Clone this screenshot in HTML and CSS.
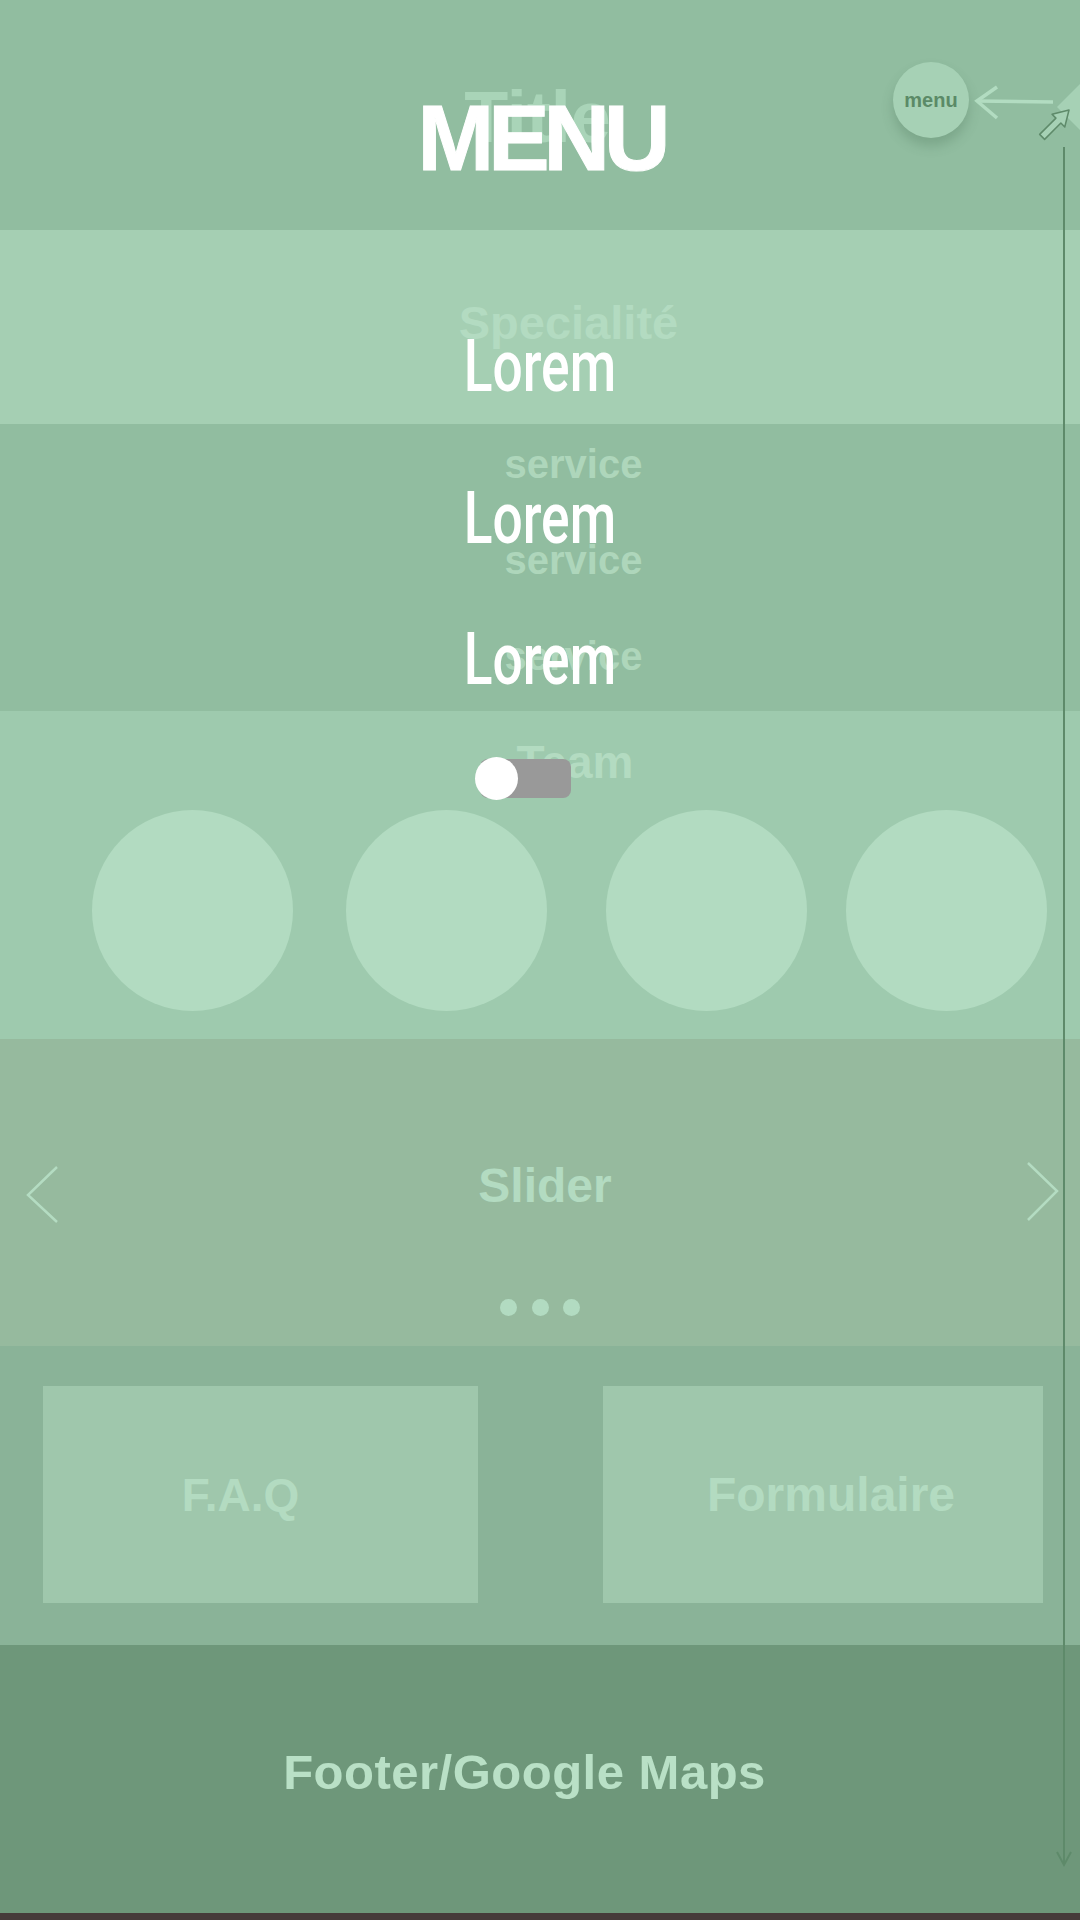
FILE: index.html
```html
<!DOCTYPE html>
<html lang="fr">
<head>
  <meta charset="UTF-8">
  <title>Maquette mobile</title>
  <link rel="stylesheet" href="styles.css">
</head>
<body>
  <div class="page">
    <header class="hero">
      <div class="ghost title">Title</div>
    </header>

    <section class="spec">
      <div class="ghost spec-title">Specialité</div>
    </section>

    <section class="services">
      <div class="ghost svc">service</div>
      <div class="ghost svc">service</div>
      <div class="ghost svc">service</div>
    </section>

    <section class="team">
      <div class="ghost team-title">Team</div>
      <div class="members">
        <div class="member"></div>
        <div class="member"></div>
        <div class="member"></div>
        <div class="member"></div>
      </div>
    </section>

    <section class="slider">
      <div class="slider-row">
        <svg class="chev-left" width="32" height="57" viewBox="0 0 32 57">
          <polyline points="31,1 2,29 31,56" />
        </svg>
        <div class="ghost slider-title">Slider</div>
        <svg class="chev-right" width="32" height="59" viewBox="0 0 32 59">
          <polyline points="1,1 30,29 1,58" />
        </svg>
      </div>
      <div class="dots"><span></span><span></span><span></span></div>
    </section>

    <section class="contact">
      <div class="card card-faq"><span class="ghost">F.A.Q</span></div>
      <div class="card card-form"><span class="ghost">Formulaire</span></div>
    </section>

    <footer class="footer">
      <div class="footer-title">Footer/Google Maps</div>
    </footer>
    <div class="bottom-bar"></div>

    <!-- menu ouvert, par-dessus la page -->
    <nav class="menu-overlay">
      <div class="menu-heading">MENU</div>
      <a class="menu-item first">Lorem</a>
      <a class="menu-item second">Lorem</a>
      <a class="menu-item third">Lorem</a>
      <div class="toggle"><span class="knob"></span></div>
    </nav>

    <button class="menu-btn">menu</button>

    <svg class="pointer-notes" width="120" height="80" viewBox="0 0 120 80">
      <polygon class="diamond" points="97,37 124,10 124,64" />
      <line class="note-arrow" x1="93" y1="32" x2="17" y2="31" />
      <polyline class="note-arrow" points="37,17 17,31 37,48" />
      <polygon class="cursor" transform="translate(109,40) rotate(45)"
        points="0,0 9,15 3.5,15 3.5,38 -3.5,38 -3.5,15 -9,15" />
    </svg>

    <svg class="scroll-line" width="16" height="1724" viewBox="0 0 16 1724">
      <line x1="8" y1="2" x2="8" y2="1720" />
      <polyline points="1,1707 8,1720 15,1707" />
    </svg>
  </div>
</body>
</html>
```

FILE: styles.css
```css
* { box-sizing: border-box; }
body { margin: 0; background: #463b3a; font-family: "Liberation Sans", Arial, sans-serif; }
.page { position: relative; width: 1080px; height: 1920px; overflow: hidden; }

.ghost { color: #b3dbc1; font-weight: bold; line-height: 1; text-align: center; }

.hero { height: 230px; background: #91bda0; padding-top: 81px; }
.title { font-size: 72px; padding-right: 5px; color: #a9d4b8; }

.spec { height: 194px; background: #a5cfb3; padding-top: 69px; }
.spec-title { font-size: 47px; padding-left: 57px; }

.services { height: 287px; background: #91bda0; padding-top: 20px; }
.svc { font-size: 40px; padding-left: 67px; color: #aed6bb; }
.svc + .svc { margin-top: 56px; }

.team { height: 328px; background: #9ecaae; padding-top: 28px; }
.team-title { font-size: 46px; padding-left: 70px; }
.members { display: flex; margin-top: 25px; padding-left: 92px; }
.member { width: 201px; height: 201px; flex: none; border-radius: 50%; background: #b2dbc1; }
.member:nth-child(2) { margin-left: 53px; }
.member:nth-child(3) { margin-left: 59px; }
.member:nth-child(4) { margin-left: 39px; }

.slider { height: 307px; background: #96ba9e; padding-top: 123px; }
.slider-row { display: flex; align-items: flex-start; padding: 0 21px 0 26px; }
.slider-row polyline { fill: none; stroke: #b4dcc2; stroke-width: 2.5; }
.chev-left { margin-top: 4px; flex: none; }
.chev-right { flex: none; }
.slider-title { flex: 1; font-size: 48px; padding-left: 5px; }
.dots { display: flex; justify-content: center; gap: 14.5px; margin-top: 76px; }
.dots span { width: 17px; height: 17px; border-radius: 50%; background: #b2dbc1; }

.contact { height: 299px; background: #8ab398; padding: 40px 37px 0 43px; display: flex; justify-content: space-between; align-items: flex-start; }
.card { height: 217px; background: #9fc7ac; display: flex; align-items: center; justify-content: center; }
.card-faq { width: 435px; padding-right: 40px; }
.card-faq .ghost { font-size: 46px; }
.card-form { width: 440px; padding-left: 16px; }
.card-form .ghost { font-size: 48px; }

.footer { height: 268px; background: #6e977a; padding-top: 103px; }
.footer-title { font-size: 49px; font-weight: bold; line-height: 1; letter-spacing: 0.5px; text-align: center; padding-right: 31px; color: #b9e0c6; }
.bottom-bar { height: 7px; background: #463b3a; }

.menu-overlay { position: absolute; top: 0; left: 0; width: 100%; display: flex; flex-direction: column; align-items: center; padding-top: 92px; }
.menu-heading { font-size: 92px; font-weight: bold; line-height: 1; letter-spacing: -6px; padding-left: 2px; color: #fff; -webkit-text-stroke: 1px #fff; }
.menu-item { font-family: Roboto, "DejaVu Sans", sans-serif; font-size: 72px; font-weight: 500; line-height: 1; color: #fff; text-decoration: none; transform: scaleX(0.74); }
.menu-item.first { margin-top: 147px; }
.menu-item.second { margin-top: 80px; }
.menu-item.third { margin-top: 69px; }
.toggle { width: 91px; height: 39px; margin: 63px 0 0 -29px; background: #999; border-radius: 8px; display: flex; align-items: center; }
.knob { width: 43px; height: 43px; flex: none; margin-left: -5px; border-radius: 50%; background: #fff; }

.menu-btn { position: absolute; left: 893px; top: 62px; width: 76px; height: 76px; padding: 0; border: 0; border-radius: 50%; background: #a6d1b5; box-shadow: 0 8px 12px rgba(60, 100, 70, 0.25); font-family: "Liberation Sans", Arial, sans-serif; font-size: 20px; font-weight: bold; color: #5b8a67; }

.pointer-notes { position: absolute; left: 960px; top: 70px; }
.diamond { fill: #a6d1b5; }
.note-arrow { fill: none; stroke: #b2dcc1; stroke-width: 3.5; }
.cursor { fill: #a6d1b5; stroke: #5e8a6a; stroke-width: 1.5; stroke-linejoin: round; }

.scroll-line { position: absolute; left: 1056px; top: 145px; }
.scroll-line line, .scroll-line polyline { fill: none; stroke: #5e8a6a; stroke-width: 2; }
```
